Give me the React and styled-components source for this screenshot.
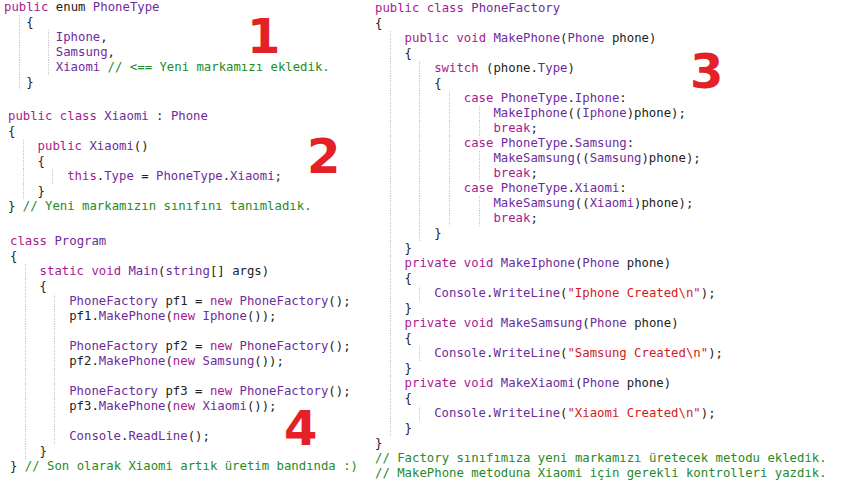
import styled, { createGlobalStyle } from "styled-components";

const KEYWORDS = new Set([
	"public",
	"private",
	"class",
	"static",
	"void",
	"new",
	"this",
	"switch",
	"case",
	"break",
]);

const TYPES = new Set([
	"PhoneType",
	"Xiaomi",
	"Phone",
	"Program",
	"PhoneFactory",
	"Iphone",
	"Samsung",
	"Console",
	"string",
	"Type",
	"Main",
	"MakePhone",
	"MakeIphone",
	"MakeSamsung",
	"MakeXiaomi",
	"WriteLine",
	"ReadLine",
]);

const enumSnippet = [
	[0, "public enum PhoneType"],
	[3, "{"],
	[7, "Iphone,"],
	[7, "Samsung,"],
	[7, "Xiaomi // <== Yeni markamızı ekledik."],
	[3, "}"],
];

const xiaomiSnippet = [
	[0, "public class Xiaomi : Phone"],
	[0, "{"],
	[4, "public Xiaomi()"],
	[4, "{"],
	[8, "this.Type = PhoneType.Xiaomi;"],
	[4, "}"],
	[0, "} // Yeni markamızın sınıfını tanımladık."],
];

const programSnippet = [
	[0, "class Program"],
	[0, "{"],
	[4, "static void Main(string[] args)"],
	[4, "{"],
	[8, "PhoneFactory pf1 = new PhoneFactory();"],
	[8, "pf1.MakePhone(new Iphone());"],
	[8, ""],
	[8, "PhoneFactory pf2 = new PhoneFactory();"],
	[8, "pf2.MakePhone(new Samsung());"],
	[8, ""],
	[8, "PhoneFactory pf3 = new PhoneFactory();"],
	[8, "pf3.MakePhone(new Xiaomi());"],
	[8, ""],
	[8, "Console.ReadLine();"],
	[4, "}"],
	[0, "} // Son olarak Xiaomi artık üretim bandında :)"],
];

const factorySnippet = [
	[0, "public class PhoneFactory"],
	[0, "{"],
	[4, "public void MakePhone(Phone phone)"],
	[4, "{"],
	[8, "switch (phone.Type)"],
	[8, "{"],
	[12, "case PhoneType.Iphone:"],
	[16, "MakeIphone((Iphone)phone);"],
	[16, "break;"],
	[12, "case PhoneType.Samsung:"],
	[16, "MakeSamsung((Samsung)phone);"],
	[16, "break;"],
	[12, "case PhoneType.Xiaomi:"],
	[16, "MakeSamsung((Xiaomi)phone);"],
	[16, "break;"],
	[8, "}"],
	[4, "}"],
	[4, "private void MakeIphone(Phone phone)"],
	[4, "{"],
	[8, 'Console.WriteLine("Iphone Created\\n");'],
	[4, "}"],
	[4, "private void MakeSamsung(Phone phone)"],
	[4, "{"],
	[8, 'Console.WriteLine("Samsung Created\\n");'],
	[4, "}"],
	[4, "private void MakeXiaomi(Phone phone)"],
	[4, "{"],
	[8, 'Console.WriteLine("Xiaomi Created\\n");'],
	[4, "}"],
	[0, "}"],
	[0, "// Factory sınıfımıza yeni markamızı üretecek metodu ekledik."],
	[0, "// MakePhone metoduna Xiaomi için gerekli kontrolleri yazdık."],
];

// very small C# highlighter, just enough for these snippets
function highlight(text) {
	const re = /(\/\/.*$)|("(?:[^"\\]|\\.)*")|([A-Za-z_][A-Za-z0-9_]*)|([^A-Za-z_"/]+|.)/g;
	const out = [];
	let m;
	let i = 0;
	while ((m = re.exec(text)) !== null) {
		let kind = "plain";
		if (m[1]) kind = "comment";
		else if (m[2]) kind = "string";
		else if (m[3] && KEYWORDS.has(m[3])) kind = "keyword";
		else if (m[3] && TYPES.has(m[3])) kind = "type";
		out.push(
			<Token key={i++} $kind={kind}>
				{m[0]}
			</Token>
		);
	}
	return out;
}

function Indent({ cols }) {
	const parts = [];
	let c = 0;
	while (cols - c >= 4) {
		parts.push(<Guide key={c} $w={4} />);
		c += 4;
	}
	const rest = cols - c;
	if (rest > 2) parts.push(<Guide key={c} $w={rest} />);
	else if (rest > 0) parts.push(<Spacer key={c} $w={rest} />);
	return parts;
}

function Snippet({ lines, badge, left, top, badgeLeft, badgeTop }) {
	return (
		<Block $left={left} $top={top}>
			{lines.map(([cols, text], i) => (
				<Line key={i}>
					<Indent cols={cols} />
					<Code>{highlight(text)}</Code>
				</Line>
			))}
			{badge && (
				<Badge $left={badgeLeft} $top={badgeTop}>
					{badge}
				</Badge>
			)}
		</Block>
	);
}

export default function App() {
	return (
		<>
			<GlobalStyle />
			<Page>
				<LeftColumn>
					<Snippet
						lines={enumSnippet}
						badge="1"
						left={4}
						top={0}
						badgeLeft={243}
						badgeTop={12}
					/>
					<Snippet
						lines={xiaomiSnippet}
						badge="2"
						left={8}
						top={19}
						badgeLeft={299}
						badgeTop={23}
					/>
					<Snippet
						lines={programSnippet}
						badge="4"
						left={10}
						top={20}
						badgeLeft={274}
						badgeTop={170}
					/>
				</LeftColumn>
				<RightColumn>
					<Snippet
						lines={factorySnippet}
						badge="3"
						left={0}
						top={1}
						badgeLeft={315}
						badgeTop={46}
					/>
				</RightColumn>
			</Page>
		</>
	);
}

const GlobalStyle = createGlobalStyle`
	body {
		margin: 0;
		background: #ffffff;
	}
`;

const Page = styled.div`
	width: 849px;
	height: 493px;
	display: flex;
	font-family: "DejaVu Sans Mono", "Liberation Mono", monospace;
	font-size: 12.3px;
	color: #222222;
	overflow: hidden;
`;

const LeftColumn = styled.div`
	width: 375px;
	display: flex;
	flex-direction: column;
`;

const RightColumn = styled.div`
	flex: 1;
	display: flex;
	flex-direction: column;
`;

const Block = styled.div`
	position: relative;
	margin-left: ${(p) => p.$left}px;
	margin-top: ${(p) => p.$top}px;
`;

const Line = styled.div`
	display: flex;
	height: 15px;
	line-height: 15px;
	white-space: pre;
`;

const Guide = styled.span`
	box-sizing: border-box;
	flex: none;
	width: ${(p) => p.$w - 2}ch;
	margin-left: 2ch;
	height: 15px;
	border-left: 1px dotted #c6c6c6;
`;

const Spacer = styled.span`
	flex: none;
	width: ${(p) => p.$w}ch;
`;

const Code = styled.span`
	white-space: pre;
`;

const tokenColors = {
	plain: "#222222",
	keyword: "#a8198f",
	type: "#6d2c9c",
	comment: "#268a26",
	string: "#d11a1a",
};

const Token = styled.span`
	color: ${(p) => tokenColors[p.$kind]};
`;

const Badge = styled.div`
	position: absolute;
	left: ${(p) => p.$left}px;
	top: ${(p) => p.$top}px;
	font-family: "DejaVu Sans", "Liberation Sans", sans-serif;
	font-weight: bold;
	font-size: 48px;
	line-height: 48px;
	color: #e52128;
`;
